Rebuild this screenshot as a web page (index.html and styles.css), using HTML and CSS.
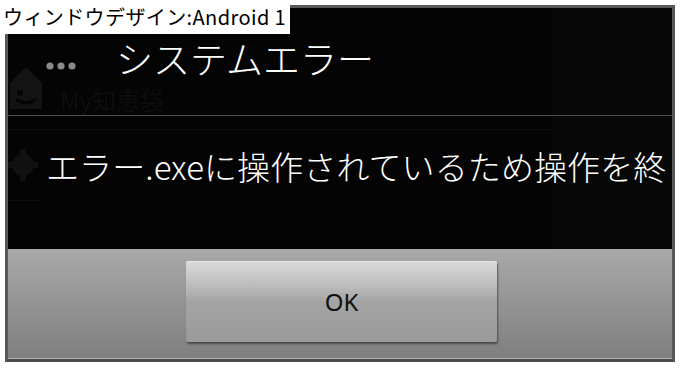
FILE: index.html
```html
<!DOCTYPE html>
<html lang="ja">
<head>
    <meta charset="UTF-8">
    <meta name="viewport" content="width=device-width, initial-scale=1.0">
    <title>ウィンドウデザイン:Android 1</title>
    <link rel="stylesheet" href="styles.css">
</head>
<body>
    <div class="caption">ウィンドウデザイン:Android 1</div>

    <div class="window">
        <!-- アプリの残像（ダイアログの後ろ） -->
        <div class="ghost">
            <svg class="ghost-home" width="36" height="46" viewBox="0 0 36 46">
                <path d="M18 2 L34 18 L34 44 L2 44 L2 18 Z" fill="#131313"/>
                <circle cx="12" cy="28" r="3" fill="#050505"/>
                <path d="M8 34 Q18 42 28 34" stroke="#050505" stroke-width="3" fill="none"/>
            </svg>
            <span class="ghost-title">My知恵袋</span>
            <svg class="ghost-gear" width="30" height="40" viewBox="0 0 30 40">
                <circle cx="15" cy="20" r="11" fill="#111111"/>
                <circle cx="15" cy="20" r="4" fill="#050505"/>
                <rect x="12" y="4" width="6" height="32" fill="#111111"/>
                <rect x="0" y="17" width="30" height="6" fill="#111111"/>
            </svg>
            <div class="ghost-line l1"></div>
            <div class="ghost-line l2"></div>
            <div class="ghost-col"></div>
            <svg class="ghost-dots" width="32" height="10" viewBox="0 0 32 10">
                <circle cx="5" cy="5" r="3.6" fill="#8a8a8a"/>
                <circle cx="16" cy="5" r="3.6" fill="#8a8a8a"/>
                <circle cx="27" cy="5" r="3.6" fill="#8a8a8a"/>
            </svg>
        </div>

        <div class="dialog-head">
            <h1>システムエラー</h1>
        </div>
        <div class="dialog-body">
            <p>エラー.exeに操作されているため操作を終</p>
        </div>
        <div class="dialog-actions">
            <button type="button">OK</button>
        </div>
    </div>
</body>
</html>
```

FILE: styles.css
```css
/* Styles généraux */
body {
    margin: 0;
    background-color: #ffffff;
    font-family: "Noto Sans CJK JP", "Noto Sans", sans-serif;
    width: 680px;
    height: 368px;
    position: relative;
    overflow: hidden;
}

.caption {
    position: absolute;
    left: 0;
    top: 0;
    z-index: 5;
    background-color: #ffffff;
    color: #000000;
    font-size: 20px;
    letter-spacing: 0.4px;
    line-height: 34px;
    height: 34px;
    padding: 0 4px 0 3px;
    white-space: nowrap;
}

.window {
    margin: 5px 0 0 5px;
    width: 670px;
    height: 357px;
    box-sizing: border-box;
    border: 3px solid #585858;
    border-bottom-color: #4a4a4a;
    background-color: #040404;
    display: flex;
    flex-direction: column;
    position: relative;
    overflow: hidden;
}

/* arrière-plan fantôme */
.ghost {
    position: absolute;
    inset: 0;
}

.ghost-home {
    position: absolute;
    left: 0;
    top: 57px;
}

.ghost-title {
    position: absolute;
    left: 52px;
    top: 80px;
    font-size: 24px;
    line-height: 1;
    color: #0d0d0d;
}

.ghost-gear {
    position: absolute;
    left: 0;
    top: 137px;
}

.ghost-line {
    position: absolute;
    height: 1px;
    background-color: #0e0e0e;
}

.ghost-line.l1 {
    left: 0;
    top: 121px;
    width: 545px;
}

.ghost-line.l2 {
    left: 0;
    top: 192px;
    width: 32px;
}

.ghost-col {
    position: absolute;
    left: 545px;
    top: 0;
    width: 119px;
    height: 242px;
    background-color: #070707;
}

.ghost-dots {
    position: absolute;
    left: 37px;
    top: 53px;
}

.dialog-head {
    height: 108px;
    border-bottom: 1px solid #4e4e4e;
    display: flex;
    align-items: center;
    padding: 0 0 8px 108px;
    box-sizing: border-box;
    position: relative;
}

h1 {
    margin: 0;
    font-size: 37px;
    font-weight: 300;
    color: #ffffff;
    line-height: 44px;
}

.dialog-body {
    height: 133px;
    padding: 30px 0 0 38px;
    box-sizing: border-box;
    position: relative;
    overflow: hidden;
}

.dialog-body p {
    margin: 0;
    font-size: 33px;
    font-weight: 300;
    letter-spacing: 0.1px;
    line-height: 40px;
    color: #ffffff;
    white-space: nowrap;
}

.dialog-actions {
    flex: 1;
    display: flex;
    justify-content: center;
    align-items: flex-start;
    padding-top: 12px;
    box-sizing: border-box;
    background: linear-gradient(#a9a9a9, #7f7f7f);
    border-bottom: 1px solid #b0b0b0;
    position: relative;
}

button {
    width: 311px;
    height: 81px;
    margin-left: 3px;
    border: none;
    border-radius: 2px;
    background: linear-gradient(#dadada 0%, #c2c2c2 25%, #a4a4a4 50%, #9a9a9a 100%);
    box-shadow: 1px 2px 2px rgba(0, 0, 0, 0.45), inset 0 1px 0 #e6e6e6;
    font-family: "Noto Sans", sans-serif;
    font-size: 24px;
    color: #111111;
    cursor: pointer;
}
```
